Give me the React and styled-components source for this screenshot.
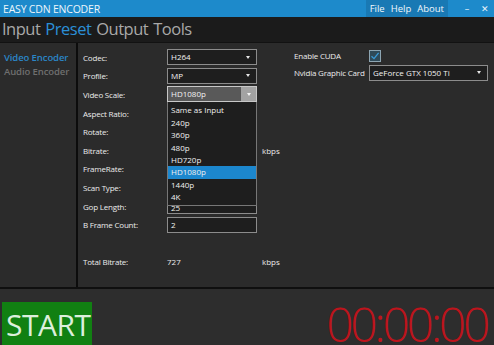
import React from "react";
import styled, { createGlobalStyle } from "styled-components";

const GlobalStyle = createGlobalStyle`
  html, body {
    margin: 0;
    padding: 0;
    background: #2d2d2d;
    overflow: hidden;
  }
  * {
    box-sizing: border-box;
  }
`;

const scales = ["Same as Input", "240p", "360p", "480p", "HD720p", "HD1080p", "1440p", "4K"];

export default function App() {
  return (
    <Window>
      <GlobalStyle />
      <TitleBar>
        <Title>EASY CDN ENCODER</Title>
        <Menu>
          <MenuItem>File</MenuItem>
          <MenuItem>Help</MenuItem>
          <MenuItem>About</MenuItem>
        </Menu>
        <WinButton>–</WinButton>
        <WinButton>✕</WinButton>
      </TitleBar>

      <TabBar>
        <Tab>Input</Tab>
        <Tab active>Preset</Tab>
        <Tab>Output</Tab>
        <Tab>Tools</Tab>
      </TabBar>

      <Main>
        <SidePanel>
          <SideItem active>Video Encoder</SideItem>
          <SideItem>Audio Encoder</SideItem>
        </SidePanel>

        <Form>
          <Label>Codec:</Label>
          <Select>H264<Arrow /></Select>
          <span />

          <Label>Profile:</Label>
          <Select>MP<Arrow /></Select>
          <span />

          <Label>Video Scale:</Label>
          <DropHolder>
            <Select open>
              HD1080p
              <ArrowBox><Arrow /></ArrowBox>
            </Select>
            <DropList>
              {scales.map((s) => (
                <DropItem key={s} selected={s === "HD1080p"}>{s}</DropItem>
              ))}
            </DropList>
          </DropHolder>
          <span />

          {/* rows below are covered by the open list */}
          <Label>Aspect Ratio:</Label>
          <Select />
          <span />

          <Label>Rotate:</Label>
          <Select />
          <span />

          <Label>Bitrate:</Label>
          <TextBox />
          <Unit>kbps</Unit>

          <Label>FrameRate:</Label>
          <Select />
          <span />

          <Label>Scan Type:</Label>
          <Select />
          <span />

          <Label>Gop Length:</Label>
          <TextBox low>25</TextBox>
          <span />

          <Label>B Frame Count:</Label>
          <TextBox>2</TextBox>
          <span />

          <Spacer />

          <Label>Total Bitrate:</Label>
          <Value>727</Value>
          <Unit>kbps</Unit>
        </Form>

        <GpuPanel>
          <GpuRow>
            <GpuLabel>Enable CUDA</GpuLabel>
            <Check>
              <svg width="10" height="10" viewBox="0 0 10 10">
                <path d="M1.5 5.2 L4 7.6 L8.6 1.8" fill="none" stroke="#3a9bd8" strokeWidth="1.3" />
              </svg>
            </Check>
          </GpuRow>
          <GpuRow>
            <GpuLabel>Nvidia Graphic Card</GpuLabel>
            <Select wide>GeForce GTX 1050 Ti<Arrow /></Select>
          </GpuRow>
        </GpuPanel>
      </Main>

      <Bottom>
        <StartButton>START</StartButton>
        <Timer>00:00:00</Timer>
      </Bottom>
    </Window>
  );
}

const Window = styled.div`
  width: 494px;
  height: 345px;
  display: flex;
  flex-direction: column;
  font-family: "Open Sans", "Noto Sans", sans-serif;
  color: #f0f0f0;
  overflow: hidden;
`;

const TitleBar = styled.div`
  height: 17px;
  background: #1d8acb;
  display: flex;
  align-items: center;
`;

const Title = styled.div`
  flex: 1;
  padding-left: 3px;
  font-size: 10.5px;
  letter-spacing: -0.2px;
  color: #eef6fb;
`;

const Menu = styled.div`
  height: 100%;
  display: flex;
  align-items: center;
  gap: 6px;
  padding: 0 4px 0 4px;
  margin-right: 10px;
  background: #1979b4;
`;

const MenuItem = styled.span`
  font-size: 9.5px;
  color: #f2f8fc;
`;

const WinButton = styled.span`
  width: 18px;
  text-align: center;
  font-size: 9px;
  color: #e8f3fa;
`;

const TabBar = styled.div`
  height: 26px;
  background: #1b1b1b;
  border-bottom: 1px solid #121212;
  display: flex;
  align-items: center;
  gap: 5px;
  padding-left: 2px;
`;

const Tab = styled.span`
  font-size: 16.5px;
  line-height: 1;
  letter-spacing: -0.5px;
  color: ${(p) => (p.active ? "#2b8fd6" : "#a9a9a9")};
`;

const Main = styled.div`
  height: 246px;
  background: #2b2b2b;
  display: flex;
  border-bottom: 2px solid #0f0f0f;
`;

const SidePanel = styled.div`
  width: 78px;
  border-right: 2px solid #0c0c0c;
  padding: 8px 0 0 4px;
  display: flex;
  flex-direction: column;
`;

const SideItem = styled.div`
  font-size: 9.5px;
  font-weight: 600;
  line-height: 14px;
  letter-spacing: -0.1px;
  color: ${(p) => (p.active ? "#2a86c8" : "#6f6f6f")};
`;

const Form = styled.div`
  width: 212px;
  padding: 5px 0 0 5px;
  display: grid;
  grid-template-columns: 79px 90px auto;
  grid-auto-rows: 18.6px;
  column-gap: 5px;
  align-items: center;
  align-content: start;
`;

const Label = styled.div`
  font-size: 8px;
  letter-spacing: -0.2px;
  color: #ececec;
`;

const Unit = styled.div`
  font-size: 8px;
  color: #ececec;
`;

const Value = styled.div`
  font-size: 8px;
  color: #ececec;
`;

const Spacer = styled.div`
  grid-column: 1 / -1;
  height: 20px;
`;

const Select = styled.div`
  position: relative;
  height: 16px;
  width: ${(p) => (p.wide ? "119px" : "90px")};
  border: 1px solid ${(p) => (p.open ? "#c8c8c8" : "#8c8c8c")};
  background: ${(p) => (p.open ? "#595959" : "#1e1e1e")};
  font-size: 8px;
  line-height: 14px;
  padding-left: 3px;
  color: #f2f2f2;
  display: flex;
  align-items: center;
  justify-content: space-between;
`;

const Arrow = styled.span`
  width: 0;
  height: 0;
  margin-right: 6px;
  border-left: 2.5px solid transparent;
  border-right: 2.5px solid transparent;
  border-top: 3px solid #e6e6e6;
`;

const ArrowBox = styled.span`
  align-self: stretch;
  width: 15px;
  background: #a3a3a3;
  display: flex;
  align-items: center;
  justify-content: center;
  & > span {
    margin-right: 0;
    border-top-color: #f4f4f4;
  }
`;

const DropHolder = styled.div`
  position: relative;
  z-index: 2;
`;

const DropList = styled.div`
  position: absolute;
  top: 16px;
  left: 0;
  width: 90px;
  height: 104px;
  background: #1e1e1e;
  border: 1px solid #777;
  border-top: none;
  padding-top: 2px;
`;

const DropItem = styled.div`
  height: 12.4px;
  line-height: 12.4px;
  font-size: 8px;
  padding-left: 3px;
  color: #f0f0f0;
  background: ${(p) => (p.selected ? "#1c87ce" : "transparent")};
`;

const TextBox = styled.div`
  height: 16px;
  width: 90px;
  border: 1px solid #8c8c8c;
  background: #1e1e1e;
  font-size: 8px;
  line-height: ${(p) => (p.low ? "17px" : "14px")};
  padding-left: 3px;
  color: #f2f2f2;
  overflow: hidden;
`;

const GpuPanel = styled.div`
  padding: 4px 0 0 4px;
  display: flex;
  flex-direction: column;
`;

const GpuRow = styled.div`
  display: flex;
  align-items: center;
  height: 17px;
`;

const GpuLabel = styled.div`
  width: 75px;
  font-size: 8px;
  letter-spacing: -0.2px;
  color: #ececec;
`;

const Check = styled.div`
  width: 12px;
  height: 12px;
  border: 1px solid #8da5b2;
  background: #2f4a58;
  display: flex;
  align-items: center;
  justify-content: center;
`;

const Bottom = styled.div`
  flex: 1;
  background: #2d2d2d;
  display: flex;
  align-items: flex-end;
  justify-content: space-between;
  padding: 0 4px 0 2px;
`;

const StartButton = styled.div`
  width: 90px;
  height: 43px;
  background: #118012;
  color: #dcefdc;
  font-size: 30px;
  line-height: 46px;
  padding-left: 4px;
  letter-spacing: -0.5px;
  white-space: nowrap;
  overflow: hidden;
`;

const Timer = styled.div`
  height: 43px;
  font-size: 48px;
  font-weight: 300;
  line-height: 44px;
  letter-spacing: -3.3px;
  padding-right: 3px;
  color: #bd141c;
  overflow: hidden;
`;
